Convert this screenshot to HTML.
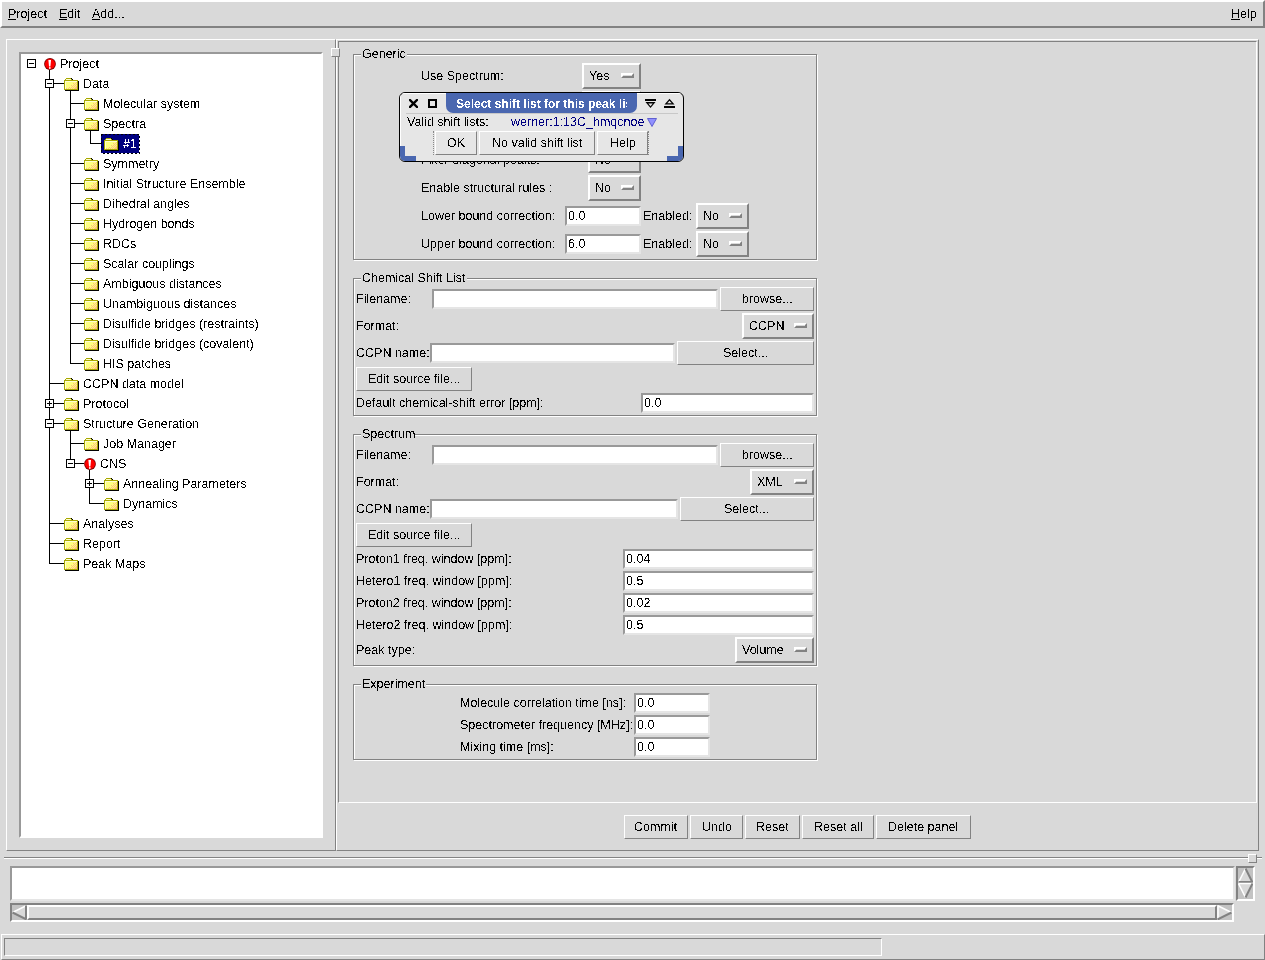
<!DOCTYPE html>
<html><head><meta charset="utf-8"><style>
html,body{margin:0;padding:0;}
body{width:1265px;height:960px;position:relative;overflow:hidden;background:#d9d9d9;font-family:"Liberation Sans",sans-serif;font-size:12.5px;color:#000;}
.a{position:absolute;box-sizing:content-box;}
.t{position:absolute;white-space:pre;line-height:15px;filter:url(#th);}
u{text-decoration:underline;text-underline-offset:1px;}
</style></head><body>
<svg width="0" height="0" style="position:absolute">
<defs>
<filter id="th"><feComponentTransfer><feFuncA type="discrete" tableValues="0 1"/></feComponentTransfer></filter>
<pattern id="dith" width="2" height="2" patternUnits="userSpaceOnUse"><rect width="1" height="1" fill="#ffc080"/><rect x="1" y="1" width="1" height="1" fill="#ffc080"/></pattern>
<symbol id="fold" viewBox="0 0 15 13" shape-rendering="crispEdges"><rect x="0" y="2" width="14" height="10" fill="#a8a800"/><rect x="1" y="3" width="12" height="8" fill="#ffff80"/><rect x="1" y="3" width="12" height="1" fill="#ffffd0"/><rect x="1" y="3" width="1" height="8" fill="#ffffd0"/><rect x="2" y="0" width="5" height="1" fill="#a8a800"/><rect x="1" y="1" width="1" height="1" fill="#a8a800"/><rect x="2" y="1" width="5" height="1" fill="#ffffd0"/><rect x="7" y="1" width="1" height="1" fill="#a8a800"/><rect x="7" y="0" width="1" height="1" fill="#000"/><rect x="8" y="1" width="1" height="1" fill="#000"/><rect x="14" y="3" width="1" height="10" fill="#000"/><rect x="1" y="12" width="14" height="1" fill="#000"/><rect x="12" y="4" width="1" height="1" fill="#ffc080"/><rect x="9" y="5" width="1" height="1" fill="#ffc080"/><rect x="11" y="5" width="1" height="1" fill="#ffc080"/><rect x="10" y="6" width="1" height="1" fill="#ffc080"/><rect x="12" y="6" width="1" height="1" fill="#ffc080"/><rect x="7" y="7" width="1" height="1" fill="#ffc080"/><rect x="9" y="7" width="1" height="1" fill="#ffc080"/><rect x="11" y="7" width="1" height="1" fill="#ffc080"/><rect x="8" y="8" width="1" height="1" fill="#ffc080"/><rect x="10" y="8" width="1" height="1" fill="#ffc080"/><rect x="12" y="8" width="1" height="1" fill="#ffc080"/><rect x="5" y="9" width="1" height="1" fill="#ffc080"/><rect x="7" y="9" width="1" height="1" fill="#ffc080"/><rect x="9" y="9" width="1" height="1" fill="#ffc080"/><rect x="11" y="9" width="1" height="1" fill="#ffc080"/><rect x="12" y="9" width="1" height="1" fill="#ffc080"/><rect x="2" y="10" width="1" height="1" fill="#ffc080"/><rect x="4" y="10" width="1" height="1" fill="#ffc080"/><rect x="6" y="10" width="1" height="1" fill="#ffc080"/><rect x="8" y="10" width="1" height="1" fill="#ffc080"/><rect x="10" y="10" width="1" height="1" fill="#ffc080"/><rect x="11" y="10" width="1" height="1" fill="#ffc080"/><rect x="12" y="10" width="1" height="1" fill="#ffc080"/></symbol>
<symbol id="err" viewBox="0 0 12 12">
<circle cx="6" cy="6" r="5.9" fill="#800000"/>
<circle cx="6" cy="6" r="5" fill="#ff0000"/>
<polygon points="4.4,2 7.0,2 6.4,8.6 5.0,8.6" fill="#fff"/>
<rect x="5" y="9.2" width="1.6" height="1.6" fill="#fff"/>
</symbol>
</defs></svg>
<div class="a" style="left:0px;top:0px;width:1261px;height:24px;background:#d9d9d9;border-style:solid;border-width:2px;border-color:#ffffff #828282 #828282 #ffffff;"></div>
<div class="t" style="left:8px;top:7px;"><u>P</u>roject</div>
<div class="t" style="left:59px;top:7px;"><u>E</u>dit</div>
<div class="t" style="left:92px;top:7px;"><u>A</u>dd...</div>
<div class="t" style="left:1231px;top:7px;"><u>H</u>elp</div>
<div class="a" style="left:6px;top:39px;width:328px;height:810px;background:#d9d9d9;border-style:solid;border-width:1px;border-color:#ffffff #828282 #828282 #ffffff;"></div>
<div class="a" style="left:336px;top:39px;width:921px;height:810px;background:#d9d9d9;border-style:solid;border-width:1px;border-color:#ffffff #828282 #828282 #ffffff;"></div>
<div class="a" style="left:338px;top:41px;width:917px;height:760px;border-style:solid;border-width:1px;border-color:#828282 #ffffff #ffffff #828282;"></div>
<div class="a" style="left:331px;top:48px;width:7px;height:7px;background:#d9d9d9;border-style:solid;border-width:1px;border-color:#ffffff #828282 #828282 #ffffff;"></div>
<div class="a" style="left:19px;top:52px;width:300px;height:782px;background:#fff;border-style:solid;border-width:2px;border-color:#999999 #fff #fff #999999;"></div>
<div class="a" style="left:49px;top:70px;width:1px;height:494px;background:#000;"></div>
<div class="a" style="left:70px;top:91px;width:1px;height:273px;background:#000;"></div>
<div class="a" style="left:90px;top:131px;width:1px;height:13px;background:#000;"></div>
<div class="a" style="left:70px;top:431px;width:1px;height:33px;background:#000;"></div>
<div class="a" style="left:89px;top:470px;width:1px;height:34px;background:#000;"></div>
<div class="a" style="left:27px;top:59px;width:7px;height:7px;background:#fff;border-style:solid;border-width:1px;border-color:#000 #000 #000 #000;"></div>
<div class="a" style="left:29px;top:63px;width:5px;height:1px;background:#000;"></div>
<svg class="a" style="left:44px;top:58px" width="12" height="12"><use href="#err"/></svg>
<div class="t" style="left:60px;top:57px;">Project</div>
<div class="a" style="left:49px;top:83px;width:15px;height:1px;background:#000;"></div>
<div class="a" style="left:45px;top:79px;width:7px;height:7px;background:#fff;border-style:solid;border-width:1px;border-color:#000 #000 #000 #000;"></div>
<div class="a" style="left:47px;top:83px;width:5px;height:1px;background:#000;"></div>
<svg class="a" style="left:64px;top:78px" width="15" height="13"><use href="#fold"/></svg>
<div class="t" style="left:83px;top:77px;">Data</div>
<div class="a" style="left:70px;top:103px;width:14px;height:1px;background:#000;"></div>
<svg class="a" style="left:84px;top:98px" width="15" height="13"><use href="#fold"/></svg>
<div class="t" style="left:103px;top:97px;">Molecular system</div>
<div class="a" style="left:70px;top:123px;width:14px;height:1px;background:#000;"></div>
<div class="a" style="left:66px;top:119px;width:7px;height:7px;background:#fff;border-style:solid;border-width:1px;border-color:#000 #000 #000 #000;"></div>
<div class="a" style="left:68px;top:123px;width:5px;height:1px;background:#000;"></div>
<svg class="a" style="left:84px;top:118px" width="15" height="13"><use href="#fold"/></svg>
<div class="t" style="left:103px;top:117px;">Spectra</div>
<div class="a" style="left:90px;top:143px;width:14px;height:1px;background:#000;"></div>
<div class="a" style="left:101px;top:134px;width:37px;height:18px;background:#000080;border-style:solid;border-width:1px;border-color:#000080 #000 #000 #000080;"></div>
<div class="a" style="left:101px;top:134px;width:39px;height:1px;background:repeating-linear-gradient(90deg,#000 0 2px,transparent 2px 4px)"></div>
<div class="a" style="left:101px;top:134px;width:1px;height:20px;background:repeating-linear-gradient(180deg,#000 0 2px,transparent 2px 4px)"></div>
<div class="a" style="left:101px;top:153px;width:39px;height:1px;background:repeating-linear-gradient(90deg,#fff 0 2px,transparent 2px 4px)"></div>
<div class="a" style="left:139px;top:134px;width:1px;height:20px;background:repeating-linear-gradient(180deg,#fff 0 2px,transparent 2px 4px)"></div>
<svg class="a" style="left:104px;top:138px" width="15" height="13"><use href="#fold"/></svg>
<div class="t" style="left:123px;top:137px;color:#fff;">#1</div>
<div class="a" style="left:70px;top:163px;width:14px;height:1px;background:#000;"></div>
<svg class="a" style="left:84px;top:158px" width="15" height="13"><use href="#fold"/></svg>
<div class="t" style="left:103px;top:157px;">Symmetry</div>
<div class="a" style="left:70px;top:183px;width:14px;height:1px;background:#000;"></div>
<svg class="a" style="left:84px;top:178px" width="15" height="13"><use href="#fold"/></svg>
<div class="t" style="left:103px;top:177px;">Initial Structure Ensemble</div>
<div class="a" style="left:70px;top:203px;width:14px;height:1px;background:#000;"></div>
<svg class="a" style="left:84px;top:198px" width="15" height="13"><use href="#fold"/></svg>
<div class="t" style="left:103px;top:197px;">Dihedral angles</div>
<div class="a" style="left:70px;top:223px;width:14px;height:1px;background:#000;"></div>
<svg class="a" style="left:84px;top:218px" width="15" height="13"><use href="#fold"/></svg>
<div class="t" style="left:103px;top:217px;">Hydrogen bonds</div>
<div class="a" style="left:70px;top:243px;width:14px;height:1px;background:#000;"></div>
<svg class="a" style="left:84px;top:238px" width="15" height="13"><use href="#fold"/></svg>
<div class="t" style="left:103px;top:237px;">RDCs</div>
<div class="a" style="left:70px;top:263px;width:14px;height:1px;background:#000;"></div>
<svg class="a" style="left:84px;top:258px" width="15" height="13"><use href="#fold"/></svg>
<div class="t" style="left:103px;top:257px;">Scalar couplings</div>
<div class="a" style="left:70px;top:283px;width:14px;height:1px;background:#000;"></div>
<svg class="a" style="left:84px;top:278px" width="15" height="13"><use href="#fold"/></svg>
<div class="t" style="left:103px;top:277px;">Ambiguous distances</div>
<div class="a" style="left:70px;top:303px;width:14px;height:1px;background:#000;"></div>
<svg class="a" style="left:84px;top:298px" width="15" height="13"><use href="#fold"/></svg>
<div class="t" style="left:103px;top:297px;">Unambiguous distances</div>
<div class="a" style="left:70px;top:323px;width:14px;height:1px;background:#000;"></div>
<svg class="a" style="left:84px;top:318px" width="15" height="13"><use href="#fold"/></svg>
<div class="t" style="left:103px;top:317px;">Disulfide bridges (restraints)</div>
<div class="a" style="left:70px;top:343px;width:14px;height:1px;background:#000;"></div>
<svg class="a" style="left:84px;top:338px" width="15" height="13"><use href="#fold"/></svg>
<div class="t" style="left:103px;top:337px;">Disulfide bridges (covalent)</div>
<div class="a" style="left:70px;top:363px;width:14px;height:1px;background:#000;"></div>
<svg class="a" style="left:84px;top:358px" width="15" height="13"><use href="#fold"/></svg>
<div class="t" style="left:103px;top:357px;">HIS patches</div>
<div class="a" style="left:49px;top:383px;width:15px;height:1px;background:#000;"></div>
<svg class="a" style="left:64px;top:378px" width="15" height="13"><use href="#fold"/></svg>
<div class="t" style="left:83px;top:377px;">CCPN data model</div>
<div class="a" style="left:49px;top:403px;width:15px;height:1px;background:#000;"></div>
<div class="a" style="left:45px;top:399px;width:7px;height:7px;background:#fff;border-style:solid;border-width:1px;border-color:#000 #000 #000 #000;"></div>
<div class="a" style="left:47px;top:403px;width:5px;height:1px;background:#000;"></div>
<div class="a" style="left:49px;top:401px;width:1px;height:5px;background:#000;"></div>
<svg class="a" style="left:64px;top:398px" width="15" height="13"><use href="#fold"/></svg>
<div class="t" style="left:83px;top:397px;">Protocol</div>
<div class="a" style="left:49px;top:423px;width:15px;height:1px;background:#000;"></div>
<div class="a" style="left:45px;top:419px;width:7px;height:7px;background:#fff;border-style:solid;border-width:1px;border-color:#000 #000 #000 #000;"></div>
<div class="a" style="left:47px;top:423px;width:5px;height:1px;background:#000;"></div>
<svg class="a" style="left:64px;top:418px" width="15" height="13"><use href="#fold"/></svg>
<div class="t" style="left:83px;top:417px;">Structure Generation</div>
<div class="a" style="left:70px;top:443px;width:14px;height:1px;background:#000;"></div>
<svg class="a" style="left:84px;top:438px" width="15" height="13"><use href="#fold"/></svg>
<div class="t" style="left:103px;top:437px;">Job Manager</div>
<div class="a" style="left:70px;top:463px;width:14px;height:1px;background:#000;"></div>
<div class="a" style="left:66px;top:459px;width:7px;height:7px;background:#fff;border-style:solid;border-width:1px;border-color:#000 #000 #000 #000;"></div>
<div class="a" style="left:68px;top:463px;width:5px;height:1px;background:#000;"></div>
<svg class="a" style="left:84px;top:458px" width="12" height="12"><use href="#err"/></svg>
<div class="t" style="left:100px;top:457px;">CNS</div>
<div class="a" style="left:89px;top:483px;width:15px;height:1px;background:#000;"></div>
<div class="a" style="left:85px;top:479px;width:7px;height:7px;background:#fff;border-style:solid;border-width:1px;border-color:#000 #000 #000 #000;"></div>
<div class="a" style="left:87px;top:483px;width:5px;height:1px;background:#000;"></div>
<div class="a" style="left:89px;top:481px;width:1px;height:5px;background:#000;"></div>
<svg class="a" style="left:104px;top:478px" width="15" height="13"><use href="#fold"/></svg>
<div class="t" style="left:123px;top:477px;">Annealing Parameters</div>
<div class="a" style="left:89px;top:503px;width:15px;height:1px;background:#000;"></div>
<svg class="a" style="left:104px;top:498px" width="15" height="13"><use href="#fold"/></svg>
<div class="t" style="left:123px;top:497px;">Dynamics</div>
<div class="a" style="left:49px;top:523px;width:15px;height:1px;background:#000;"></div>
<svg class="a" style="left:64px;top:518px" width="15" height="13"><use href="#fold"/></svg>
<div class="t" style="left:83px;top:517px;">Analyses</div>
<div class="a" style="left:49px;top:543px;width:15px;height:1px;background:#000;"></div>
<svg class="a" style="left:64px;top:538px" width="15" height="13"><use href="#fold"/></svg>
<div class="t" style="left:83px;top:537px;">Report</div>
<div class="a" style="left:49px;top:563px;width:15px;height:1px;background:#000;"></div>
<svg class="a" style="left:64px;top:558px" width="15" height="13"><use href="#fold"/></svg>
<div class="t" style="left:83px;top:557px;">Peak Maps</div>
<div class="a" style="left:354px;top:55px;width:462px;height:204px;border-style:solid;border-width:1px;border-color:#ffffff #ffffff #ffffff #ffffff;"></div>
<div class="a" style="left:353px;top:54px;width:462px;height:204px;border-style:solid;border-width:1px;border-color:#828282 #828282 #828282 #828282;"></div>
<div class="a" style="left:361px;top:52px;width:46px;height:6px;background:#d9d9d9;"></div>
<div class="t" style="left:362px;top:47px;">Generic</div>
<div class="t" style="left:421px;top:69px;">Use Spectrum:</div>
<div class="a" style="left:582px;top:63px;width:55px;height:22px;background:#d9d9d9;border-style:solid;border-width:2px;border-color:#ffffff #828282 #828282 #ffffff;"></div>
<div class="t" style="left:589px;top:69px;">Yes</div>
<div class="a" style="left:621px;top:73px;width:9px;height:1px;background:#d9d9d9;border-style:solid;border-width:2px;border-color:#ffffff #828282 #828282 #ffffff;"></div>
<div class="a" style="left:582px;top:91px;width:55px;height:22px;background:#d9d9d9;border-style:solid;border-width:2px;border-color:#ffffff #828282 #828282 #ffffff;"></div>
<div class="t" style="left:589px;top:97px;">Yes</div>
<div class="a" style="left:621px;top:101px;width:9px;height:1px;background:#d9d9d9;border-style:solid;border-width:2px;border-color:#ffffff #828282 #828282 #ffffff;"></div>
<div class="a" style="left:588px;top:119px;width:49px;height:22px;background:#d9d9d9;border-style:solid;border-width:2px;border-color:#ffffff #828282 #828282 #ffffff;"></div>
<div class="t" style="left:595px;top:125px;">No</div>
<div class="a" style="left:621px;top:129px;width:9px;height:1px;background:#d9d9d9;border-style:solid;border-width:2px;border-color:#ffffff #828282 #828282 #ffffff;"></div>
<div class="t" style="left:421px;top:153px;">Filter diagonal peaks:</div>
<div class="a" style="left:588px;top:147px;width:49px;height:22px;background:#d9d9d9;border-style:solid;border-width:2px;border-color:#ffffff #828282 #828282 #ffffff;"></div>
<div class="t" style="left:595px;top:153px;">No</div>
<div class="a" style="left:621px;top:157px;width:9px;height:1px;background:#d9d9d9;border-style:solid;border-width:2px;border-color:#ffffff #828282 #828282 #ffffff;"></div>
<div class="t" style="left:421px;top:181px;">Enable structural rules :</div>
<div class="a" style="left:588px;top:175px;width:49px;height:22px;background:#d9d9d9;border-style:solid;border-width:2px;border-color:#ffffff #828282 #828282 #ffffff;"></div>
<div class="t" style="left:595px;top:181px;">No</div>
<div class="a" style="left:621px;top:185px;width:9px;height:1px;background:#d9d9d9;border-style:solid;border-width:2px;border-color:#ffffff #828282 #828282 #ffffff;"></div>
<div class="t" style="left:421px;top:209px;">Lower bound correction:</div>
<div class="a" style="left:565px;top:206px;width:72px;height:16px;background:#fff;border-style:solid;border-width:2px;border-color:#999999 #e5e5e5 #e5e5e5 #999999;"></div>
<div class="t" style="left:568px;top:209px;">0.0</div>
<div class="t" style="left:643px;top:209px;">Enabled:</div>
<div class="a" style="left:696px;top:203px;width:49px;height:22px;background:#d9d9d9;border-style:solid;border-width:2px;border-color:#ffffff #828282 #828282 #ffffff;"></div>
<div class="t" style="left:703px;top:209px;">No</div>
<div class="a" style="left:729px;top:213px;width:9px;height:1px;background:#d9d9d9;border-style:solid;border-width:2px;border-color:#ffffff #828282 #828282 #ffffff;"></div>
<div class="t" style="left:421px;top:237px;">Upper bound correction:</div>
<div class="a" style="left:565px;top:234px;width:72px;height:16px;background:#fff;border-style:solid;border-width:2px;border-color:#999999 #e5e5e5 #e5e5e5 #999999;"></div>
<div class="t" style="left:568px;top:237px;">6.0</div>
<div class="t" style="left:643px;top:237px;">Enabled:</div>
<div class="a" style="left:696px;top:231px;width:49px;height:22px;background:#d9d9d9;border-style:solid;border-width:2px;border-color:#ffffff #828282 #828282 #ffffff;"></div>
<div class="t" style="left:703px;top:237px;">No</div>
<div class="a" style="left:729px;top:241px;width:9px;height:1px;background:#d9d9d9;border-style:solid;border-width:2px;border-color:#ffffff #828282 #828282 #ffffff;"></div>
<div class="a" style="left:354px;top:279px;width:462px;height:136px;border-style:solid;border-width:1px;border-color:#ffffff #ffffff #ffffff #ffffff;"></div>
<div class="a" style="left:353px;top:278px;width:462px;height:136px;border-style:solid;border-width:1px;border-color:#828282 #828282 #828282 #828282;"></div>
<div class="a" style="left:361px;top:276px;width:106px;height:6px;background:#d9d9d9;"></div>
<div class="t" style="left:362px;top:271px;">Chemical Shift List</div>
<div class="t" style="left:356px;top:292px;">Filename:</div>
<div class="a" style="left:432px;top:289px;width:282px;height:16px;background:#fff;border-style:solid;border-width:2px;border-color:#999999 #e5e5e5 #e5e5e5 #999999;"></div>
<div class="a" style="left:720px;top:287px;width:92px;height:22px;background:#d9d9d9;border-style:solid;border-width:1px;border-color:#ffffff #828282 #828282 #ffffff;"></div>
<div class="t" style="left:742px;top:292px;">browse...</div>
<div class="t" style="left:356px;top:319px;">Format:</div>
<div class="a" style="left:742px;top:313px;width:68px;height:22px;background:#d9d9d9;border-style:solid;border-width:2px;border-color:#ffffff #828282 #828282 #ffffff;"></div>
<div class="t" style="left:749px;top:319px;">CCPN</div>
<div class="a" style="left:794px;top:323px;width:9px;height:1px;background:#d9d9d9;border-style:solid;border-width:2px;border-color:#ffffff #828282 #828282 #ffffff;"></div>
<div class="t" style="left:356px;top:346px;">CCPN name:</div>
<div class="a" style="left:430px;top:343px;width:241px;height:16px;background:#fff;border-style:solid;border-width:2px;border-color:#999999 #e5e5e5 #e5e5e5 #999999;"></div>
<div class="a" style="left:677px;top:341px;width:135px;height:22px;background:#d9d9d9;border-style:solid;border-width:1px;border-color:#ffffff #828282 #828282 #ffffff;"></div>
<div class="t" style="left:723px;top:346px;">Select...</div>
<div class="a" style="left:356px;top:367px;width:114px;height:22px;background:#d9d9d9;border-style:solid;border-width:1px;border-color:#ffffff #828282 #828282 #ffffff;"></div>
<div class="t" style="left:368px;top:372px;">Edit source file...</div>
<div class="t" style="left:356px;top:396px;">Default chemical-shift error [ppm]:</div>
<div class="a" style="left:641px;top:393px;width:169px;height:16px;background:#fff;border-style:solid;border-width:2px;border-color:#999999 #e5e5e5 #e5e5e5 #999999;"></div>
<div class="t" style="left:644px;top:396px;">0.0</div>
<div class="a" style="left:354px;top:435px;width:462px;height:230px;border-style:solid;border-width:1px;border-color:#ffffff #ffffff #ffffff #ffffff;"></div>
<div class="a" style="left:353px;top:434px;width:462px;height:230px;border-style:solid;border-width:1px;border-color:#828282 #828282 #828282 #828282;"></div>
<div class="a" style="left:361px;top:432px;width:54px;height:6px;background:#d9d9d9;"></div>
<div class="t" style="left:362px;top:427px;">Spectrum</div>
<div class="t" style="left:356px;top:448px;">Filename:</div>
<div class="a" style="left:432px;top:445px;width:282px;height:16px;background:#fff;border-style:solid;border-width:2px;border-color:#999999 #e5e5e5 #e5e5e5 #999999;"></div>
<div class="a" style="left:720px;top:443px;width:92px;height:22px;background:#d9d9d9;border-style:solid;border-width:1px;border-color:#ffffff #828282 #828282 #ffffff;"></div>
<div class="t" style="left:742px;top:448px;">browse...</div>
<div class="t" style="left:356px;top:475px;">Format:</div>
<div class="a" style="left:750px;top:469px;width:60px;height:22px;background:#d9d9d9;border-style:solid;border-width:2px;border-color:#ffffff #828282 #828282 #ffffff;"></div>
<div class="t" style="left:757px;top:475px;">XML</div>
<div class="a" style="left:794px;top:479px;width:9px;height:1px;background:#d9d9d9;border-style:solid;border-width:2px;border-color:#ffffff #828282 #828282 #ffffff;"></div>
<div class="t" style="left:356px;top:502px;">CCPN name:</div>
<div class="a" style="left:430px;top:499px;width:244px;height:16px;background:#fff;border-style:solid;border-width:2px;border-color:#999999 #e5e5e5 #e5e5e5 #999999;"></div>
<div class="a" style="left:680px;top:497px;width:132px;height:22px;background:#d9d9d9;border-style:solid;border-width:1px;border-color:#ffffff #828282 #828282 #ffffff;"></div>
<div class="t" style="left:724px;top:502px;">Select...</div>
<div class="a" style="left:356px;top:523px;width:114px;height:22px;background:#d9d9d9;border-style:solid;border-width:1px;border-color:#ffffff #828282 #828282 #ffffff;"></div>
<div class="t" style="left:368px;top:528px;">Edit source file...</div>
<div class="t" style="left:356px;top:552px;">Proton1 freq. window [ppm]:</div>
<div class="a" style="left:623px;top:549px;width:187px;height:16px;background:#fff;border-style:solid;border-width:2px;border-color:#999999 #e5e5e5 #e5e5e5 #999999;"></div>
<div class="t" style="left:626px;top:552px;">0.04</div>
<div class="t" style="left:356px;top:574px;">Hetero1 freq. window [ppm]:</div>
<div class="a" style="left:623px;top:571px;width:187px;height:16px;background:#fff;border-style:solid;border-width:2px;border-color:#999999 #e5e5e5 #e5e5e5 #999999;"></div>
<div class="t" style="left:626px;top:574px;">0.5</div>
<div class="t" style="left:356px;top:596px;">Proton2 freq. window [ppm]:</div>
<div class="a" style="left:623px;top:593px;width:187px;height:16px;background:#fff;border-style:solid;border-width:2px;border-color:#999999 #e5e5e5 #e5e5e5 #999999;"></div>
<div class="t" style="left:626px;top:596px;">0.02</div>
<div class="t" style="left:356px;top:618px;">Hetero2 freq. window [ppm]:</div>
<div class="a" style="left:623px;top:615px;width:187px;height:16px;background:#fff;border-style:solid;border-width:2px;border-color:#999999 #e5e5e5 #e5e5e5 #999999;"></div>
<div class="t" style="left:626px;top:618px;">0.5</div>
<div class="t" style="left:356px;top:643px;">Peak type:</div>
<div class="a" style="left:735px;top:637px;width:75px;height:22px;background:#d9d9d9;border-style:solid;border-width:2px;border-color:#ffffff #828282 #828282 #ffffff;"></div>
<div class="t" style="left:742px;top:643px;">Volume</div>
<div class="a" style="left:794px;top:647px;width:9px;height:1px;background:#d9d9d9;border-style:solid;border-width:2px;border-color:#ffffff #828282 #828282 #ffffff;"></div>
<div class="a" style="left:354px;top:685px;width:462px;height:74px;border-style:solid;border-width:1px;border-color:#ffffff #ffffff #ffffff #ffffff;"></div>
<div class="a" style="left:353px;top:684px;width:462px;height:74px;border-style:solid;border-width:1px;border-color:#828282 #828282 #828282 #828282;"></div>
<div class="a" style="left:361px;top:682px;width:65px;height:6px;background:#d9d9d9;"></div>
<div class="t" style="left:362px;top:677px;">Experiment</div>
<div class="t" style="left:460px;top:696px;">Molecule correlation time [ns]:</div>
<div class="a" style="left:634px;top:693px;width:72px;height:16px;background:#fff;border-style:solid;border-width:2px;border-color:#999999 #e5e5e5 #e5e5e5 #999999;"></div>
<div class="t" style="left:637px;top:696px;">0.0</div>
<div class="t" style="left:460px;top:718px;">Spectrometer frequency [MHz]:</div>
<div class="a" style="left:634px;top:715px;width:72px;height:16px;background:#fff;border-style:solid;border-width:2px;border-color:#999999 #e5e5e5 #e5e5e5 #999999;"></div>
<div class="t" style="left:637px;top:718px;">0.0</div>
<div class="t" style="left:460px;top:740px;">Mixing time [ms]:</div>
<div class="a" style="left:634px;top:737px;width:72px;height:16px;background:#fff;border-style:solid;border-width:2px;border-color:#999999 #e5e5e5 #e5e5e5 #999999;"></div>
<div class="t" style="left:637px;top:740px;">0.0</div>
<div class="a" style="left:624px;top:815px;width:62px;height:22px;background:#d9d9d9;border-style:solid;border-width:1px;border-color:#ffffff #828282 #828282 #ffffff;"></div>
<div class="t" style="left:634px;top:820px;">Commit</div>
<div class="a" style="left:690px;top:815px;width:51px;height:22px;background:#d9d9d9;border-style:solid;border-width:1px;border-color:#ffffff #828282 #828282 #ffffff;"></div>
<div class="t" style="left:702px;top:820px;">Undo</div>
<div class="a" style="left:745px;top:815px;width:53px;height:22px;background:#d9d9d9;border-style:solid;border-width:1px;border-color:#ffffff #828282 #828282 #ffffff;"></div>
<div class="t" style="left:756px;top:820px;">Reset</div>
<div class="a" style="left:802px;top:815px;width:70px;height:22px;background:#d9d9d9;border-style:solid;border-width:1px;border-color:#ffffff #828282 #828282 #ffffff;"></div>
<div class="t" style="left:814px;top:820px;">Reset all</div>
<div class="a" style="left:876px;top:815px;width:93px;height:22px;background:#d9d9d9;border-style:solid;border-width:1px;border-color:#ffffff #828282 #828282 #ffffff;"></div>
<div class="t" style="left:888px;top:820px;">Delete panel</div>
<div class="a" style="left:399px;top:92px;width:283px;height:68px;background:#e6e6e6;border:1px solid #000;border-radius:6px;overflow:hidden"><div class="a" style="left:0px;top:0px;width:283px;height:1px;background:#fff"></div><div class="a" style="left:0px;top:0px;width:1px;height:68px;background:#fff"></div><div class="a" style="left:46px;top:0px;width:191px;height:20px;background:#4a67b0;border-radius:0 0 7px 7px;overflow:hidden"><div class="t" style="left:10px;top:4px;width:171px;overflow:hidden;color:#fff;font-weight:bold;font-size:12px">Select shift list for this peak list</div></div><div class="a" style="left:0px;top:53px;width:16px;height:15px;background:#4a67b0"></div><div class="a" style="left:5px;top:53px;width:11px;height:10px;background:#e6e6e6"></div><div class="a" style="left:267px;top:53px;width:16px;height:15px;background:#4a67b0"></div><div class="a" style="left:267px;top:53px;width:11px;height:10px;background:#e6e6e6"></div></div>
<svg class="a" style="left:409px;top:99px" width="9" height="9"><path d="M1,1 L8,8 M8,1 L1,8" stroke="#000" stroke-width="2.4" stroke-linecap="square"/></svg>
<div class="a" style="left:428px;top:99px;width:5px;height:5px;border-style:solid;border-width:2px;border-color:#000 #000 #000 #000;"></div>
<svg class="a" style="left:644px;top:98px" width="13" height="11"><rect x="1" y="1" width="11" height="2" fill="#000"/><polygon points="1.5,4 11.5,4 6.5,10" fill="#000"/><polygon points="4.3,5.6 8.7,5.6 6.5,8.2" fill="#e6e6e6"/></svg>
<svg class="a" style="left:663px;top:98px" width="13" height="11"><polygon points="1.5,6.5 11.5,6.5 6.5,0.8" fill="#000"/><polygon points="4.2,5.2 8.8,5.2 6.5,2.8" fill="#e6e6e6"/><rect x="1" y="8" width="11" height="2" fill="#000"/></svg>
<div class="a" style="left:406px;top:113px;width:272px;height:1px;background:#c8c8c8;"></div>
<div class="t" style="left:407px;top:115px;">Valid shift lists:</div>
<div class="t" style="left:511px;top:115px;color:#000080;">werner:1:13C_hmqcnoe</div>
<svg class="a" style="left:647px;top:118px" width="10" height="9"><path d="M0.5,0.5 L9.5,0.5 L5,8.5 Z" fill="#9090ff" stroke="#6060d0" stroke-width="1"/></svg>
<div class="a" style="left:433px;top:131px;width:1px;height:24px;border-left:1px dotted #888;width:0;"></div>
<div class="a" style="left:648px;top:131px;width:1px;height:24px;border-left:1px dotted #888;width:0;"></div>
<div class="a" style="left:435px;top:131px;width:40px;height:22px;background:#e6e6e6;border-style:solid;border-width:1px;border-color:#ffffff #828282 #828282 #ffffff;"></div>
<div class="t" style="left:447px;top:136px;">OK</div>
<div class="a" style="left:479px;top:131px;width:114px;height:22px;background:#e6e6e6;border-style:solid;border-width:1px;border-color:#ffffff #828282 #828282 #ffffff;"></div>
<div class="t" style="left:492px;top:136px;">No valid shift list</div>
<div class="a" style="left:597px;top:131px;width:49px;height:22px;background:#e6e6e6;border-style:solid;border-width:1px;border-color:#ffffff #828282 #828282 #ffffff;"></div>
<div class="t" style="left:610px;top:136px;">Help</div>
<div class="a" style="left:4px;top:857px;width:1258px;height:1px;background:#828282;"></div>
<div class="a" style="left:4px;top:858px;width:1258px;height:1px;background:#ffffff;"></div>
<div class="a" style="left:1248px;top:854px;width:7px;height:7px;background:#d9d9d9;border-style:solid;border-width:1px;border-color:#ffffff #828282 #828282 #ffffff;"></div>
<div class="a" style="left:10px;top:866px;width:1221px;height:31px;background:#fff;border-style:solid;border-width:2px;border-color:#999999 #e5e5e5 #e5e5e5 #999999;"></div>
<div class="a" style="left:1236px;top:866px;width:15px;height:31px;background:#c3c3c3;border-style:solid;border-width:2px;border-color:#828282 #ffffff #ffffff #828282;"></div>
<svg class="a" style="left:1238px;top:868px" width="15" height="30"><polygon points="7.5,0 15,15 0,15" fill="#d9d9d9"/><path d="M7.5,0.5 L0.5,14.5" stroke="#fff" stroke-width="1.5"/><path d="M7.5,0.5 L14.5,14.5 M0.5,14 L14.5,14" stroke="#828282" stroke-width="2"/><polygon points="0,15.5 15,15.5 7.5,30" fill="#d9d9d9"/><path d="M0.5,15.5 L14.5,15.5 M0.5,15.5 L7.5,29.5" stroke="#fff" stroke-width="1.5"/><path d="M14.5,15.5 L7.5,29.5" stroke="#828282" stroke-width="2"/></svg>
<div class="a" style="left:10px;top:903px;width:1220px;height:15px;background:#c3c3c3;border-style:solid;border-width:2px;border-color:#828282 #ffffff #ffffff #828282;"></div>
<div class="a" style="left:27px;top:905px;width:1186px;height:11px;background:#d9d9d9;border-style:solid;border-width:2px;border-color:#ffffff #828282 #828282 #ffffff;"></div>
<svg class="a" style="left:12px;top:905px" width="15" height="15"><polygon points="0,7.5 15,0 15,15" fill="#d9d9d9"/><path d="M0.5,7.5 L14.5,0.5" stroke="#fff" stroke-width="1.5"/><path d="M0.5,7.5 L14.5,14.5 M14,0.5 L14,14.5" stroke="#828282" stroke-width="2"/></svg>
<svg class="a" style="left:1217px;top:905px" width="15" height="15"><polygon points="0,0 15,7.5 0,15" fill="#d9d9d9"/><path d="M0.5,0.5 L14.5,7.5 M1,0.5 L1,14.5" stroke="#fff" stroke-width="1.5"/><path d="M0.5,14.5 L14.5,7.5" stroke="#828282" stroke-width="2"/></svg>
<div class="a" style="left:1px;top:934px;width:1262px;height:24px;background:#d9d9d9;border-style:solid;border-width:1px;border-color:#ffffff #828282 #828282 #ffffff;"></div>
<div class="a" style="left:4px;top:938px;width:876px;height:16px;border-style:solid;border-width:1px;border-color:#828282 #ffffff #ffffff #828282;"></div>
</body></html>
